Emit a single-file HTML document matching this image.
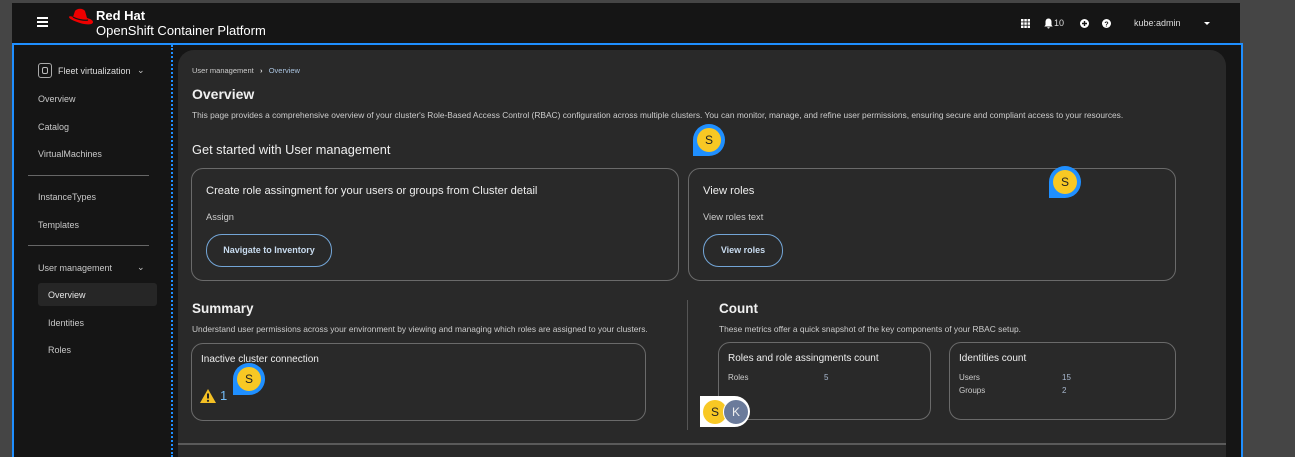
<!DOCTYPE html>
<html><head><meta charset="utf-8"><style>
*{box-sizing:border-box;margin:0;padding:0}
body{width:1295px;height:457px;background:#454545;font-family:"Liberation Sans",sans-serif;color:#e0e0e0;position:relative;overflow:hidden}
.a{position:absolute;white-space:nowrap}
.mast{left:12px;top:3px;width:1228px;height:40px;background:#151515}
.frame{left:12px;top:43px;width:1231px;height:414px;border:2px solid #1f8fff;border-bottom:none;background:#151515}
.side{left:14px;top:45px;width:157px;height:412px;background:#151515}
.dots{left:171px;top:45px;height:412px;border-left:2px dotted #1f8fff}
.main{left:178px;top:50px;width:1048px;height:407px;background:#292929;border-radius:16px 16px 0 0}
.nav{font-size:9px;color:#c8c8c8}
.card{border:1px solid #6a6a6a;border-radius:12px}
.btn{border:1px solid #73a5d6;border-radius:16px;font-size:9px;font-weight:bold;color:#c9dcf0;text-align:center}
h1,h2{font-weight:bold;color:#f0f0f0}
.pin{width:32px;height:32px;background:#1f8fff;border-radius:16px 16px 16px 0}
.pin i{position:absolute;left:4px;top:4px;width:24px;height:24px;border-radius:50%;background:#f8c824;color:#222;font-style:normal;font-size:12px;text-align:center;line-height:24px}
.t8{font-size:8px;color:#ccc}
</style></head><body>
<div class="a mast"></div>
<div class="a" style="left:37px;top:17px;width:11px;height:2px;background:#fff;box-shadow:0 4px #fff,0 8px #fff"></div>
<svg class="a" style="left:68px;top:8px" width="26" height="20" viewBox="0 0 26 20"><path d="M7 3 C9 0 15 0 17 3 L19 10 C22 11 25 12 25 14 C25 17 18 17 12 15 C6 13 1 11 1 9 C1 8 3 8 5 9 Z" fill="#e00"/><path d="M5 9 C8 11 16 13 20 12" stroke="#151515" stroke-width="1.3" fill="none"/></svg>
<div class="a" style="left:96px;top:9px;font-size:13px;font-weight:bold;color:#fff;line-height:13px">Red Hat</div>
<div class="a" style="left:96px;top:23px;font-size:13px;color:#fff;line-height:15px">OpenShift Container Platform</div>
<svg class="a" style="left:1021px;top:19px" width="9" height="9"><g fill="#fff"><rect x="0" y="0" width="2.5" height="2.5"/><rect x="3.3" y="0" width="2.5" height="2.5"/><rect x="6.6" y="0" width="2.5" height="2.5"/><rect x="0" y="3.3" width="2.5" height="2.5"/><rect x="3.3" y="3.3" width="2.5" height="2.5"/><rect x="6.6" y="3.3" width="2.5" height="2.5"/><rect x="0" y="6.6" width="2.5" height="2.5"/><rect x="3.3" y="6.6" width="2.5" height="2.5"/><rect x="6.6" y="6.6" width="2.5" height="2.5"/></g></svg>
<svg class="a" style="left:1044px;top:18px" width="9" height="11" viewBox="0 0 9 11"><path d="M4.5 0.5C2.5 0.5 1.5 2 1.5 4V7L0.3 8.5H8.7L7.5 7V4C7.5 2 6.5 0.5 4.5 0.5Z M3.3 9.3H5.7C5.7 10 5.2 10.5 4.5 10.5S3.3 10 3.3 9.3Z" fill="#fff"/></svg>
<div class="a" style="left:1054px;top:18px;font-size:9px;color:#ddd">10</div>
<svg class="a" style="left:1080px;top:19px" width="9" height="9"><circle cx="4.5" cy="4.5" r="4.5" fill="#fff"/><path d="M4.5 2v5M2 4.5h5" stroke="#151515" stroke-width="1.4"/></svg>
<svg class="a" style="left:1102px;top:19px" width="9" height="9"><circle cx="4.5" cy="4.5" r="4.5" fill="#fff"/><text x="4.5" y="7.3" font-size="7" font-weight="bold" text-anchor="middle" fill="#151515" font-family="Liberation Sans">?</text></svg>
<div class="a" style="left:1134px;top:18px;font-size:9px;color:#ddd">kube:admin</div>
<div class="a" style="left:1204px;top:22px;border-left:3px solid transparent;border-right:3px solid transparent;border-top:3px solid #fff"></div>

<div class="a frame"></div>
<div class="a side"></div>
<div class="a dots"></div>
<div class="a" style="left:38px;top:63px;width:14px;height:15px;border:1px solid #aaa;border-radius:3px"></div>
<div class="a" style="left:42px;top:67px;width:6px;height:7px;border:1px solid #bbb;border-radius:2px"></div>
<div class="a nav" style="left:58px;top:66px;color:#ddd">Fleet virtualization</div>
<div class="a nav" style="left:137px;top:65px">⌄</div>
<div class="a nav" style="left:38px;top:94px">Overview</div>
<div class="a nav" style="left:38px;top:122px">Catalog</div>
<div class="a nav" style="left:38px;top:149px">VirtualMachines</div>
<div class="a" style="left:28px;top:175px;width:121px;height:1px;background:#666"></div>
<div class="a nav" style="left:38px;top:192px">InstanceTypes</div>
<div class="a nav" style="left:38px;top:220px">Templates</div>
<div class="a" style="left:28px;top:245px;width:121px;height:1px;background:#666"></div>
<div class="a nav" style="left:38px;top:263px">User management</div>
<div class="a nav" style="left:137px;top:262px">⌄</div>
<div class="a" style="left:38px;top:283px;width:119px;height:23px;background:#262626;border-radius:3px"></div>
<div class="a nav" style="left:48px;top:290px;color:#e6e6e6">Overview</div>
<div class="a nav" style="left:48px;top:318px">Identities</div>
<div class="a nav" style="left:48px;top:345px">Roles</div>

<div class="a main"></div>
<div class="a" style="left:178px;top:443px;width:1048px;height:2px;background:#5a5a5a"></div>
<div class="a t8" style="left:192px;top:66px;font-size:7.5px">User management &nbsp;&nbsp;<b style="color:#ddd">›</b>&nbsp;&nbsp; <span style="color:#a9c2dd">Overview</span></div>
<h1 class="a" style="left:192px;top:86px;font-size:14px">Overview</h1>
<div class="a t8" style="left:192px;top:110px;font-size:8.4px">This page provides a comprehensive overview of your cluster's Role-Based Access Control (RBAC) configuration across multiple clusters. You can monitor, manage, and refine user permissions, ensuring secure and compliant access to your resources.</div>
<div class="a" style="left:192px;top:142px;font-size:12.8px;color:#eee">Get started with User management</div>

<div class="a card" style="left:191px;top:168px;width:488px;height:113px"></div>
<div class="a" style="left:206px;top:185px;font-size:11.2px;color:#eee">Create role assingment for your users or groups from Cluster detail</div>
<div class="a" style="left:206px;top:212px;color:#ccc;font-size:9.3px">Assign</div>
<div class="a btn" style="left:206px;top:234px;width:126px;height:33px;line-height:31px">Navigate to Inventory</div>

<div class="a card" style="left:688px;top:168px;width:488px;height:113px"></div>
<div class="a" style="left:703px;top:185px;font-size:11.2px;color:#eee">View roles</div>
<div class="a" style="left:703px;top:212px;font-size:9.3px;color:#ccc">View roles text</div>
<div class="a btn" style="left:703px;top:234px;width:80px;height:33px;line-height:31px">View roles</div>

<h2 class="a" style="left:192px;top:301px;font-size:13.5px">Summary</h2>
<div class="a t8" style="left:192px;top:324px;font-size:8.4px">Understand user permissions across your environment by viewing and managing which roles are assigned to your clusters.</div>
<div class="a card" style="left:191px;top:343px;width:455px;height:78px"></div>
<div class="a" style="left:201px;top:354px;font-size:10px;color:#eee">Inactive cluster connection</div>
<svg class="a" style="left:199px;top:388px" width="18" height="16" viewBox="0 0 18 16"><path d="M9 1L17 15H1Z" fill="#f4c024"/><path d="M9 5.5v5" stroke="#222" stroke-width="2"/><circle cx="9" cy="12.8" r="1.1" fill="#222"/></svg>
<div class="a" style="left:220px;top:388px;font-size:13px;color:#73bcf7">1</div>

<div class="a" style="left:687px;top:300px;width:1px;height:130px;background:#555"></div>
<h2 class="a" style="left:719px;top:301px;font-size:13.5px">Count</h2>
<div class="a t8" style="left:719px;top:324px;font-size:8.4px">These metrics offer a quick snapshot of the key components of your RBAC setup.</div>
<div class="a card" style="left:718px;top:342px;width:213px;height:78px"></div>
<div class="a" style="left:728px;top:353px;font-size:10px;color:#eee">Roles and role assingments count</div>
<div class="a t8" style="left:728px;top:373px">Roles</div>
<div class="a t8" style="left:824px;top:373px;color:#a9b9d0">5</div>
<div class="a card" style="left:949px;top:342px;width:227px;height:78px"></div>
<div class="a" style="left:959px;top:353px;font-size:10px;color:#eee">Identities count</div>
<div class="a t8" style="left:959px;top:373px">Users</div>
<div class="a t8" style="left:1062px;top:373px;color:#a9b9d0">15</div>
<div class="a t8" style="left:959px;top:386px">Groups</div>
<div class="a t8" style="left:1062px;top:386px;color:#a9b9d0">2</div>

<div class="a pin" style="left:693px;top:124px"><i>S</i></div>
<div class="a pin" style="left:1049px;top:166px"><i>S</i></div>
<div class="a pin" style="left:233px;top:363px"><i>S</i></div>
<div class="a" style="left:700px;top:396px;width:50px;height:31px;background:#fff;border-radius:0 16px 16px 0"></div>
<div class="a" style="left:703px;top:400px;width:24px;height:24px;border-radius:50%;background:#f8c824;color:#222;font-size:12px;text-align:center;line-height:24px">S</div>
<div class="a" style="left:723px;top:399px;width:26px;height:26px;border-radius:50%;background:#6b7b9b;border:1px solid #fff;color:#eee;font-size:12px;text-align:center;line-height:24px">K</div>
</body></html>
